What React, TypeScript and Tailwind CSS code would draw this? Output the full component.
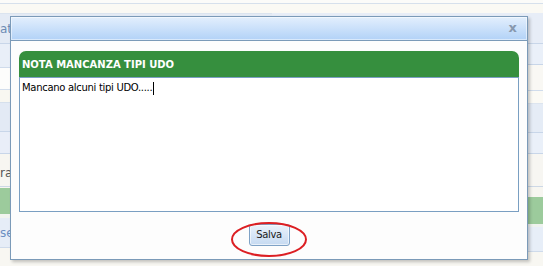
import React from "react";

export default function App() {
  return (
    <div className="relative w-[543px] h-[266px] overflow-hidden bg-[#f8f7f2] font-['DejaVu_Sans',sans-serif]">
      {/* background page */}
      <div className="flex h-full">
        <div className="w-[272px] flex flex-col">
          <div className="h-[3px] bg-[#fbfbf9]" />
          <div className="h-px bg-[#d6e0ec]" />
          <div className="h-[9px] bg-[#faf9f4]" />
          <div className="h-px bg-[#dbe4ef]" />
          <div className="h-[29px] bg-[#e4ebf5] flex items-center text-[12px] text-[#6d8cb4] leading-none">ato</div>
          <div className="h-px bg-[#c8d6e9]" />
          <div className="h-[23px] bg-[#e9eff8]" />
          <div className="h-px bg-[#cfdbeb]" />
          <div className="h-[21px] bg-[#fdfdfc]" />
          <div className="h-px bg-[#d3deec]" />
          <div className="h-[12px] bg-[#f8f7f1]" />
          <div className="h-px bg-[#d6e0ec]" />
          <div className="h-[28px] bg-[#e3eaf5]" />
          <div className="h-px bg-[#c8d6e9]" />
          <div className="h-[21px] bg-[#e9eef8]" />
          <div className="h-px bg-[#c8d6e9]" />
          <div className="h-[32px] bg-[#f7f6f1] flex items-center pt-[6px] text-[12px] text-[#555] leading-none">ra</div>
          <div className="h-px bg-[#cdd8e6]" />
          <div className="h-px bg-[#f6f6f1]" />
          <div className="h-[26px] bg-[#9ccb9c]" />
          <div className="h-[4px] bg-[#f1f4ef]" />
          <div className="h-[29px] bg-[#e6edf7] flex items-center text-[12px] text-[#6b8fc2] leading-none">se</div>
          <div className="h-px bg-[#cfdbeb]" />
          <div className="flex-1 bg-[#f8f7f2]" />
        </div>
        <div className="flex-1 flex flex-col">
          <div className="h-[3px] bg-[#fbfbf9]" />
          <div className="h-px bg-[#d6e0ec]" />
          <div className="h-[9px] bg-[#faf9f4]" />
          <div className="h-[30px] bg-[#e7edf7]" />
          <div className="h-px bg-[#c8d6e9]" />
          <div className="h-[20px] bg-[#eaf0f9]" />
          <div className="h-px bg-[#c8d6e9]" />
          <div className="h-[25px] bg-[#f9f8f4]" />
          <div className="h-px bg-[#d0dcec]" />
          <div className="h-[12px] bg-[#fbfaf5]" />
          <div className="h-px bg-[#dde5ef]" />
          <div className="h-[28px] bg-[#e5ecf6]" />
          <div className="h-px bg-[#c8d6e9]" />
          <div className="h-[20px] bg-[#eaf0f9]" />
          <div className="h-px bg-[#c8d6e9]" />
          <div className="h-[32px] bg-[#f7f6f2]" />
          <div className="h-px bg-[#cdd8e6]" />
          <div className="h-[10px] bg-[#f7f6f1]" />
          <div className="h-[27px] bg-[#9ccb9c]" />
          <div className="h-[3px] bg-[#eef2ee]" />
          <div className="h-[24px] bg-[#e7eef8]" />
          <div className="h-px bg-[#cfdbeb]" />
          <div className="flex-1 bg-[#f8f7f2]" />
        </div>
      </div>

      {/* dialog */}
      <div className="absolute left-[10px] top-[16px] w-[518px] h-[244px] border border-[#7b9ab8] bg-[#fdfdfd] flex flex-col shadow-[2px_2px_3px_rgba(0,0,0,0.22)]">
        <div className="h-[24px] bg-gradient-to-b from-[#e3effd] to-[#b2d2f7] border-b border-[#7b9ab8] flex items-center justify-end pr-[10px] shadow-[inset_0_0_0_1px_rgba(255,255,255,0.5)]">
          <span className="font-bold text-[13px] leading-none text-[#8798ae] pb-[2px]">x</span>
        </div>
        <div className="flex-1 flex flex-col px-[8px] pt-[10px]">
          <div className="h-[26px] bg-[#368f3e] rounded-t-[7px] flex items-center pl-[3px] pt-[1px]">
            <span className="font-bold text-[10px] text-white leading-none">NOTA MANCANZA TIPI UDO</span>
          </div>
          <div className="h-[135px] border border-[#7a9fc2] bg-white px-[2px] pt-[3px]">
            <div className="flex items-center text-[10px] leading-[14px] text-black tracking-[-0.3px]">
              <span>Mancano alcuni tipi UDO.....</span>
              <span className="ml-[1px] w-px h-[13px] bg-black" />
            </div>
          </div>
          <div className="flex-1 flex justify-center pt-[12px]">
            <button className="w-[41px] h-[22px] rounded-[3px] border border-[#7fa2c6] bg-gradient-to-b from-[#eaf2fb] to-[#c6daf1] text-[10px] text-[#1a1a1a] tracking-[-0.4px] leading-none flex items-center justify-center pb-[1px] shadow-[inset_0_0_0_1px_rgba(255,255,255,0.6)]">
              Salva
            </button>
          </div>
        </div>
      </div>

      {/* red annotation ellipse */}
      <svg className="absolute left-[230px] top-[221px]" width="78" height="37" viewBox="0 0 78 37">
        <ellipse cx="39" cy="18.5" rx="37" ry="16.5" fill="none" stroke="#dc1f23" strokeWidth="2" />
      </svg>
    </div>
  );
}
